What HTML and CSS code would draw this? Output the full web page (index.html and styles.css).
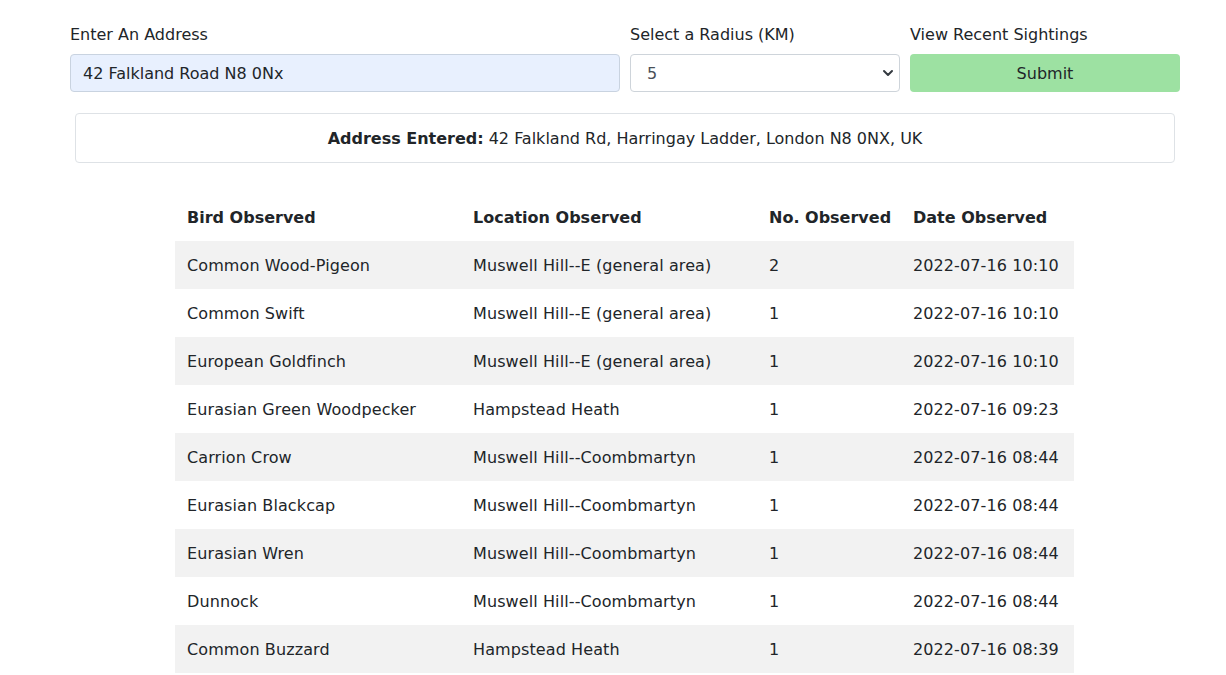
FILE: index.html
```html
<!DOCTYPE html>
<html lang="en">
<head>
<meta charset="utf-8">
<title>Recent Sightings</title>
<link rel="stylesheet" href="styles.css">
</head>
<body>
<div class="page">
  <form class="search">
    <div class="field field-address">
      <label class="label" for="addr">Enter An Address</label>
      <input id="addr" class="input input-address" type="text" value="42 Falkland Road N8 0Nx">
    </div>
    <div class="field field-radius">
      <label class="label" for="radius">Select a Radius (KM)</label>
      <div class="select-wrap">
        <select id="radius" class="input select">
          <option>1</option>
          <option>2</option>
          <option selected>5</option>
          <option>10</option>
        </select>
        <svg class="chevron" width="12" height="10" viewBox="0 0 12 10"><path d="M2 3l4 4 4-4" fill="none" stroke="#343a40" stroke-width="2" stroke-linecap="round" stroke-linejoin="round"/></svg>
      </div>
    </div>
    <div class="field field-submit">
      <span class="label">View Recent Sightings</span>
      <button type="button" class="btn">Submit</button>
    </div>
  </form>

  <div class="entered"><strong>Address Entered:</strong> 42 Falkland Rd, Harringay Ladder, London N8 0NX, UK</div>

  <table class="sightings">
    <thead>
      <tr><th class="c1">Bird Observed</th><th class="c2">Location Observed</th><th class="c3">No. Observed</th><th class="c4">Date Observed</th></tr>
    </thead>
    <tbody>
      <tr><td>Common Wood-Pigeon</td><td>Muswell Hill--E (general area)</td><td>2</td><td>2022-07-16 10:10</td></tr>
      <tr><td>Common Swift</td><td>Muswell Hill--E (general area)</td><td>1</td><td>2022-07-16 10:10</td></tr>
      <tr><td>European Goldfinch</td><td>Muswell Hill--E (general area)</td><td>1</td><td>2022-07-16 10:10</td></tr>
      <tr><td>Eurasian Green Woodpecker</td><td>Hampstead Heath</td><td>1</td><td>2022-07-16 09:23</td></tr>
      <tr><td>Carrion Crow</td><td>Muswell Hill--Coombmartyn</td><td>1</td><td>2022-07-16 08:44</td></tr>
      <tr><td>Eurasian Blackcap</td><td>Muswell Hill--Coombmartyn</td><td>1</td><td>2022-07-16 08:44</td></tr>
      <tr><td>Eurasian Wren</td><td>Muswell Hill--Coombmartyn</td><td>1</td><td>2022-07-16 08:44</td></tr>
      <tr><td>Dunnock</td><td>Muswell Hill--Coombmartyn</td><td>1</td><td>2022-07-16 08:44</td></tr>
      <tr><td>Common Buzzard</td><td>Hampstead Heath</td><td>1</td><td>2022-07-16 08:39</td></tr>
    </tbody>
  </table>
</div>
</body>
</html>
```

FILE: styles.css
```css
* { box-sizing: border-box; }
html, body { margin: 0; padding: 0; background: #fff; }
body {
  font-family: "DejaVu Sans", Verdana, sans-serif;
  font-size: 16px;
  color: #212529;
  line-height: 24px;
}
.page { padding: 23px 46px 0 70px; }
.search { display: flex; gap: 10px; margin: 0; }
.field { display: flex; flex-direction: column; }
.field-address { width: 550px; }
.field-radius { width: 270px; }
.field-submit { width: 270px; }
.label { display: block; margin-bottom: 7px; color: #212529; }
.input {
  height: 38px;
  border: 1px solid #ced4da;
  border-radius: 4px;
  font-family: inherit;
  font-size: 16px;
  padding: 0 12px;
  width: 100%;
  color: #212529;
  background: #fff;
  outline: none;
}
.input-address { background: #e8f0fe; border-color: #c9d3e0; }
.select-wrap { position: relative; }
.select { appearance: none; -webkit-appearance: none; padding-left: 16px; color: #495057; }
.chevron { position: absolute; right: 6px; top: 14px; pointer-events: none; }
.btn {
  height: 38px;
  border: 0;
  border-radius: 4px;
  background: #9de1a2;
  color: #212529;
  font-family: inherit;
  font-size: 16px;
  width: 100%;
}
.entered {
  margin: 21px 5px 0 5px;
  height: 50px;
  padding-top: 2px;
  border: 1px solid #dee2e6;
  border-radius: 4px;
  display: flex;
  align-items: center;
  justify-content: center;
  color: #212529;
}
.entered strong { font-weight: bold; margin-right: 5px; }
.sightings {
  margin: 30px 0 0 105px;
  border-collapse: collapse;
  width: 899px;
  table-layout: fixed;
}
.sightings th, .sightings td {
  height: 48px;
  padding: 2px 12px 0;
  text-align: left;
  vertical-align: middle;
  white-space: nowrap;
}
.sightings td { letter-spacing: 0.1px; }
.sightings th { font-weight: bold; }
.c1 { width: 286px; }
.c2 { width: 296px; }
.c3 { width: 144px; }
.c4 { width: 173px; }
.sightings tbody tr:nth-child(odd) { background: #f2f2f2; }
```
